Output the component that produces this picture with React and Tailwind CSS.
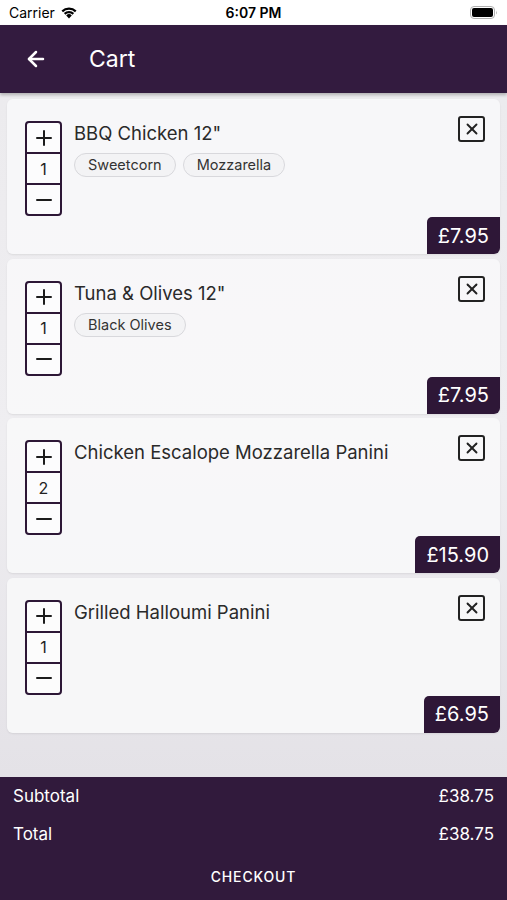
import { ArrowLeft, Plus, Minus, X } from 'lucide-react';

const ITEMS = [
  { name: 'BBQ Chicken 12"', qty: 1, extras: ['Sweetcorn', 'Mozzarella'], price: '£7.95' },
  { name: 'Tuna & Olives 12"', qty: 1, extras: ['Black Olives'], price: '£7.95' },
  { name: 'Chicken Escalope Mozzarella Panini', qty: 2, extras: [], price: '£15.90' },
  { name: 'Grilled Halloumi Panini', qty: 1, extras: [], price: '£6.95' },
];

function StatusBar() {
  return (
    <div className="h-[25px] bg-white flex items-center justify-between px-[9px] text-[14px] text-black relative">
      <div className="flex items-center gap-[5px]">
        <span>Carrier</span>
        <svg width="18" height="13" viewBox="0 0 18 13">
          <path d="M9 12.5 L6.2 9.4 A4 4 0 0 1 11.8 9.4 Z" fill="black" />
          <path d="M3.9 7.1 A7.4 7.4 0 0 1 14.1 7.1 L12.6 8.7 A5.3 5.3 0 0 0 5.4 8.7 Z" fill="black" />
          <path d="M1.5 4.6 A10.8 10.8 0 0 1 16.5 4.6 L15 6.2 A8.7 8.7 0 0 0 3 6.2 Z" fill="black" />
        </svg>
      </div>
      <span className="absolute left-1/2 -translate-x-1/2 font-semibold">6:07 PM</span>
      <svg width="28" height="13" viewBox="0 0 28 13">
        <rect x="0.5" y="0.5" width="24" height="12" rx="3.5" fill="none" stroke="#b0b0b0" />
        <rect x="2" y="2" width="21" height="9" rx="2" fill="black" />
        <path d="M26 4.5 Q27.5 6.5 26 8.5 Z" fill="#b0b0b0" />
      </svg>
    </div>
  );
}

function Stepper({ qty }) {
  return (
    <div className="w-[37px] h-[95px] border-2 border-[#2d1736] rounded-[4px] flex flex-col shrink-0 bg-white/60">
      <div className="flex-1 flex items-center justify-center border-b-2 border-[#2d1736]">
        <Plus size={24} strokeWidth={2} color="#1c1c1c" />
      </div>
      <div className="flex-1 flex items-center justify-center border-b-2 border-[#2d1736] text-[16px] text-[#222]">
        {qty}
      </div>
      <div className="flex-1 flex items-center justify-center">
        <Minus size={24} strokeWidth={2} color="#1c1c1c" />
      </div>
    </div>
  );
}

function CartItem({ item }) {
  return (
    <div className="relative h-[155px] shrink-0 bg-[#f8f8f9]/95 rounded-[6px] shadow-[0_1px_2px_rgba(0,0,0,0.08)] flex pl-[18px] pt-[22px] pr-[15px] overflow-hidden">
      <Stepper qty={item.qty} />
      <div className="flex-1 pl-[12px]">
        <div className="text-[18.5px] leading-[24px] text-[#2a2a2a]">{item.name}</div>
        {item.extras.length > 0 && (
          <div className="flex gap-[7px] mt-[8px]">
            {item.extras.map((e) => (
              <span
                key={e}
                className="h-[24px] px-[13px] rounded-full border border-[#d8d8dc] bg-[#f3f3f5] text-[14.5px] text-[#333] flex items-center"
              >
                {e}
              </span>
            ))}
          </div>
        )}
      </div>
      <div className="w-[27px] h-[26px] mt-[-5px] border-2 border-[#222] rounded-[3px] flex items-center justify-center shrink-0">
        <X size={18} strokeWidth={2.5} color="#222" />
      </div>
      <div className="absolute right-0 bottom-0 h-[37px] px-[11px] bg-[#2e1737] rounded-tl-[5px] flex items-center text-[20px] text-white">
        {item.price}
      </div>
    </div>
  );
}

export default function App() {
  return (
    <div className="w-[507px] h-[900px] flex flex-col font-['Inter',sans-serif] overflow-hidden">
      <StatusBar />
      <div className="h-[68px] bg-[#331b3f] flex items-center pl-[24px] shadow-[0_2px_3px_rgba(0,0,0,0.25)] z-10">
        <ArrowLeft size={24} strokeWidth={2.5} color="white" />
        <span className="ml-[41px] text-[23px] text-white">Cart</span>
      </div>
      <div className="flex-1 bg-gradient-to-b from-[#ecebee] via-[#efeef1] to-[#e4e2e7] px-[7px] pt-[6px] flex flex-col gap-[4.5px]">
        {ITEMS.map((item) => (
          <CartItem key={item.name} item={item} />
        ))}
      </div>
      <div className="h-[123px] bg-[#311a3c] text-white flex flex-col">
        <div className="flex justify-between px-[13px] text-[17px] h-[39px] items-center">
          <span>Subtotal</span>
          <span>£38.75</span>
        </div>
        <div className="flex justify-between px-[13px] text-[17px] h-[37px] items-center">
          <span>Total</span>
          <span>£38.75</span>
        </div>
        <div className="h-[46px] flex items-center justify-center text-[14px] font-medium tracking-[0.06em]">CHECKOUT</div>
      </div>
    </div>
  );
}
